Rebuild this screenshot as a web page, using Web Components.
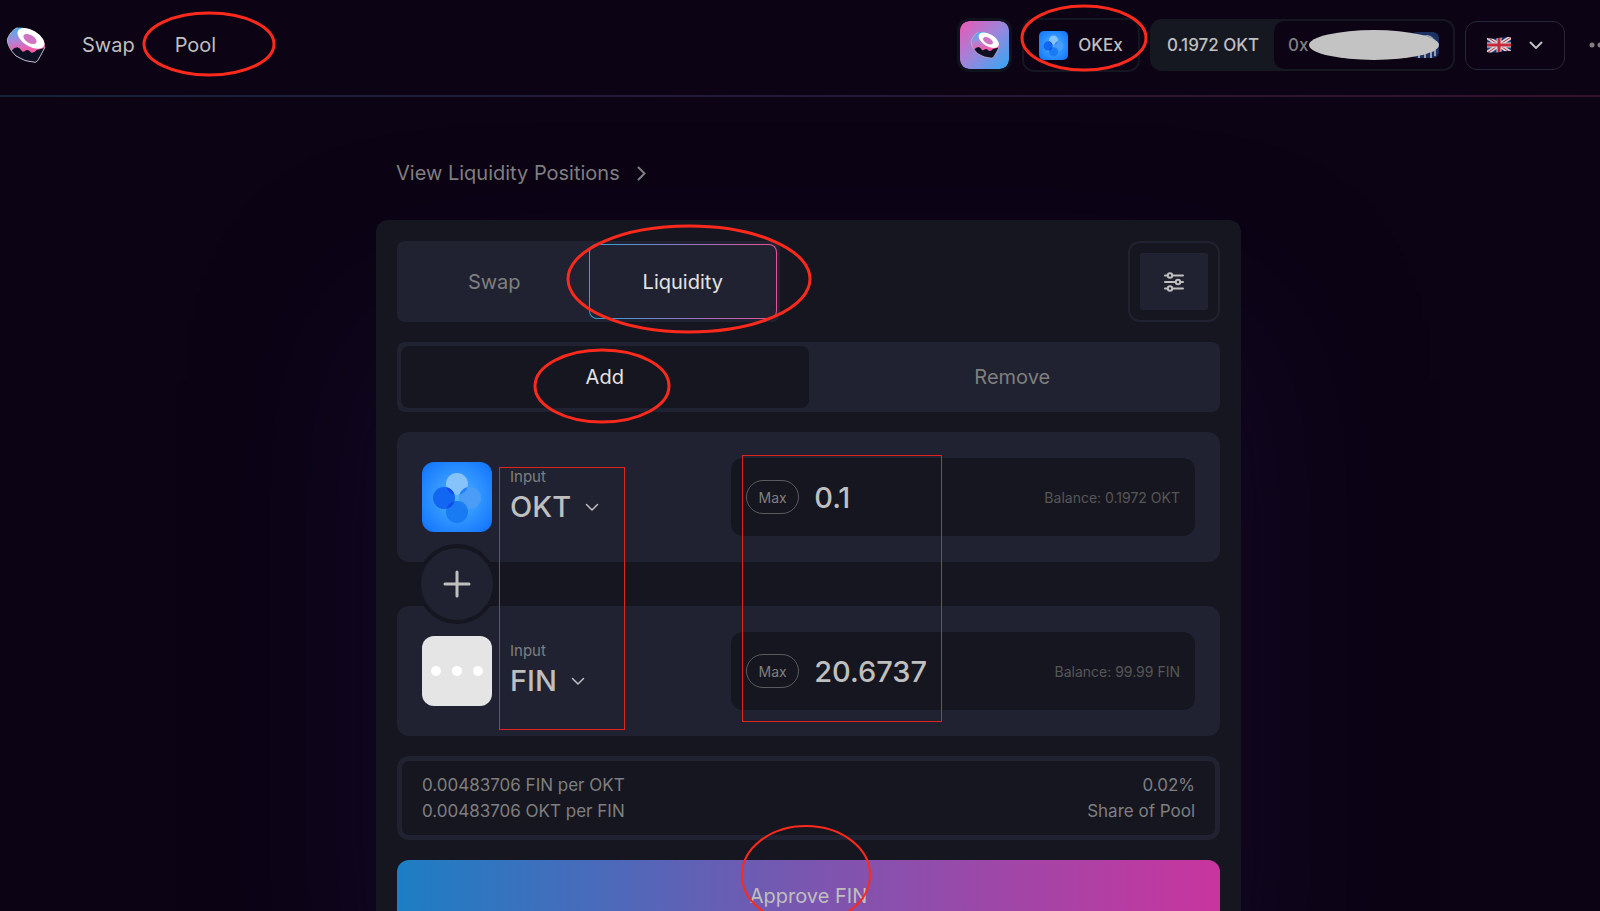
<!DOCTYPE html>
<html lang="en">
<head>
<meta charset="utf-8">
<meta name="viewport" content="width=device-width, initial-scale=1">
<title>Add Liquidity</title>
<style>
  html, body {
    margin: 0;
    height: 100%;
    overflow: hidden;
    background: #0c0314;
    color: #bfbfbf;
    font-family: Inter, "Liberation Sans", sans-serif;
    font-size: 20px;
  }

  body {
    position: relative;
  }
</style>
</head>
<body>
<swap-app></swap-app>
<note-layer></note-layer>

<script>
const base = `
  * { box-sizing: border-box; }
  :host { display: block; }
  svg { display: block; flex: none; }
  button {
    font: inherit;
    color: inherit;
    background: none;
    border: none;
    padding: 0;
    margin: 0;
    cursor: pointer;
  }
  a { color: inherit; text-decoration: none; }
`;

const sushiLogo = (w, id) => `
  <svg width="${w}" viewBox="16 18 120 112" aria-hidden="true">
    <defs>
      <linearGradient id="${id}" x1="0.2" y1="0" x2="0.3" y2="0.8">
        <stop offset="0" stop-color="#3fb4ee"/>
        <stop offset="0.45" stop-color="#a888dc"/>
        <stop offset="0.85" stop-color="#f45aa8"/>
      </linearGradient>
    </defs>
    <path d="M50 23 Q30 32 20 58 Q20 82 46 108 Q72 126 104 127 Q112 124 118 110 L133 82 Q134 62 110 42 Q78 18 50 23Z" fill="url(#${id})"/>
    <path d="M32 92 Q42 82 50 82 Q58 84 64 94 Q70 97 76 91 Q84 88 92 98 Q100 100 108 90 L132 84 L118 110 Q112 124 104 126 Q72 125 47 108Z" fill="#0d1022"/>
    <path d="M50 23 Q30 32 20 58 Q20 82 46 108 Q72 126 104 127 Q112 124 118 110 L133 82" fill="none" stroke="#b8b8c8" stroke-width="3"/>
    <ellipse cx="91" cy="55" rx="45" ry="24" transform="rotate(31 91 55)" fill="#fff"/>
    <ellipse cx="88" cy="57" rx="22" ry="12" transform="rotate(31 88 57)" fill="#cf74c4"/>
  </svg>`;

const okexLogo = (w, id) => `
  <svg width="${w}" height="${w}" viewBox="0 0 70 70" aria-hidden="true">
    <defs>
      <radialGradient id="${id}" r="0.65">
        <stop offset="0" stop-color="#4fb4ff"/>
        <stop offset="1" stop-color="#1276ff"/>
      </radialGradient>
      <clipPath id="${id}-left"><circle cx="22" cy="36" r="11"/></clipPath>
      <clipPath id="${id}-right"><circle cx="48" cy="36" r="11"/></clipPath>
    </defs>
    <rect width="70" height="70" rx="12" fill="url(#${id})"/>
    <circle cx="35" cy="22" r="11" fill="#85c3fa"/>
    <circle cx="48" cy="36" r="11" fill="#4a9cf6"/>
    <circle cx="35" cy="50" r="11" fill="#197bf3"/>
    <circle cx="22" cy="36" r="11" fill="#1267f2"/>
    <g fill="#0f4cee" clip-path="url(#${id}-left)">
      <circle cx="35" cy="22" r="11"/><circle cx="35" cy="50" r="11"/>
    </g>
    <g fill="#1f80f5" clip-path="url(#${id}-right)">
      <circle cx="35" cy="22" r="11"/><circle cx="35" cy="50" r="11"/>
    </g>
  </svg>`;

const chevron = (w, width) => `
  <svg width="${w}" viewBox="0 0 14 9" fill="none" stroke="currentColor" stroke-width="${width}" stroke-linecap="round" stroke-linejoin="round" aria-hidden="true">
    <path d="M1.500 1.500L7 7L12.500 1.500"/>
  </svg>`;

const ukFlag = `
  <svg width="24" height="18" viewBox="0 0 24 18" aria-hidden="true">
    <defs>
      <clipPath id="wave"><path d="M0 2Q6 3.500 12 2T24 1V15Q18 14.500 12 16T0 16Z"/></clipPath>
    </defs>
    <g clip-path="url(#wave)">
      <rect width="24" height="18" fill="#1c3578"/>
      <path d="M0 1L24 17M24 1L0 17" stroke="#d8d8d8" stroke-width="4"/>
      <path d="M0 1L24 17M24 1L0 17" stroke="#c0283c" stroke-width="1"/>
      <path d="M12 0V18M0 9H24" stroke="#d8d8d8" stroke-width="5"/>
      <path d="M12 0V18M0 9H24" stroke="#c8283c" stroke-width="3"/>
    </g>
  </svg>`;

class AppHeader extends HTMLElement {
  constructor() {
    super();
    this.attachShadow({ mode: 'open' }).innerHTML = `
      <style>
        ${base}
        header {
          display: flex;
          align-items: center;
          justify-content: space-between;
          padding: 18px 4px 23px 6px;
        }
        .line {
          height: 2px;
          background: linear-gradient(to right, #162438, #241a38 50%, #35132e);
        }
        nav, .tools { display: flex; align-items: center; }
        nav { gap: 40px; }
        nav svg { margin-right: -4px; }
        .tools { gap: 10px; font-size: 17px; font-weight: 500; }
        .token {
          display: flex;
          align-items: center;
          justify-content: center;
          width: 55px;
          height: 54px;
          border: 3px solid #10121e;
          border-radius: 12px;
          background: linear-gradient(135deg, #ec58b4, #9a86dc 50%, #2fa8f5);
          background-clip: padding-box;
        }
        .chain {
          display: flex;
          align-items: center;
          justify-content: center;
          gap: 10px;
          width: 118px;
          height: 54px;
          border: 2px solid #141622;
          border-radius: 12px;
        }
        .wallet {
          display: flex;
          align-items: center;
          width: 305px;
          height: 52px;
          padding: 2px;
          border-radius: 12px;
          background: #161821;
        }
        .wallet span { flex: 1; text-align: center; white-space: nowrap; }
        .account {
          display: flex;
          align-items: center;
          justify-content: space-between;
          width: 179px;
          height: 48px;
          padding: 0 14px;
          border-radius: 10px;
          background: #0c0314;
          color: #7f7f7f;
        }
        .lang {
          display: flex;
          align-items: center;
          justify-content: center;
          gap: 18px;
          width: 100px;
          height: 49px;
          border: 1px solid #252838;
          border-radius: 12px;
        }
        .more { margin-left: 14px; }
      </style>
      <header>
        <nav>
          ${sushiLogo(40, 'brand')}
          <a href="#swap">Swap</a>
          <a href="#pool">Pool</a>
        </nav>
        <div class="tools">
          <button class="token" aria-label="Add token to wallet">${sushiLogo(30, 'coin')}</button>
          <button class="chain">${okexLogo(29, 'chain')}OKEx</button>
          <div class="wallet">
            <span>0.1972 OKT</span>
            <button class="account">0x
              <svg width="28" height="26" viewBox="0 0 28 26" aria-hidden="true">
                <rect width="28" height="26" rx="6" fill="#1b3060"/>
                <path d="M10 7Q16 1 22 7M8 26V22M14 26V22M20 26V19L24 18V24" fill="none" stroke="#9a9eb4" stroke-width="2"/>
              </svg>
            </button>
          </div>
          <button class="lang" aria-label="Language">${ukFlag}${chevron(14, 2)}</button>
          <button class="more" aria-label="More">
            <svg width="24" height="6" viewBox="0 0 24 6" fill="#7f7f7f" aria-hidden="true">
              <circle cx="3" cy="3" r="2.500"/><circle cx="11" cy="3" r="2.500"/><circle cx="19" cy="3" r="2.500"/>
            </svg>
          </button>
        </div>
      </header>
      <div class="line"></div>
    `;
  }
}
customElements.define('app-header', AppHeader);

class ModeTabs extends HTMLElement {
  constructor() {
    super();
    this.attachShadow({ mode: 'open' }).innerHTML = `
      <style>
        ${base}
        .row { display: flex; justify-content: space-between; }
        .tabs {
          display: grid;
          grid-template-columns: 1fr 1fr;
          flex: 0 1 383px;
          padding: 3px;
          border-radius: 8px;
          background: #202231;
          color: #7f7f7f;
        }
        .tabs button { height: 75px; }
        .tabs .active {
          color: #e3e3e3;
          border: 1px solid transparent;
          border-radius: 8px;
          background:
            linear-gradient(#202231, #202231) padding-box,
            linear-gradient(to right, #2ba4d8, #8a78c0 50%, #ea4f98) border-box;
        }
        .settings {
          display: flex;
          width: 92px;
          height: 81px;
          padding: 10px;
          border: 2px solid #202231;
          border-radius: 12px;
        }
        .settings span {
          display: flex;
          flex: 1;
          align-items: center;
          justify-content: center;
          border-radius: 2px;
          background: #202231;
        }
      </style>
      <div class="row">
        <div class="tabs">
          <button>Swap</button>
          <button class="active">Liquidity</button>
        </div>
        <button class="settings" aria-label="Settings">
          <span>
            <svg width="20" height="20" viewBox="0 0 20 20" fill="#202231" stroke="#bfbfbf" stroke-width="2" stroke-linecap="round" aria-hidden="true">
              <path d="M1 3.500H19M1 10H19M1 16.500H19"/>
              <circle cx="6" cy="3.500" r="2.200"/>
              <circle cx="14" cy="10" r="2.200"/>
              <circle cx="6" cy="16.500" r="2.200"/>
            </svg>
          </span>
        </button>
      </div>
    `;
  }
}
customElements.define('mode-tabs', ModeTabs);

class ActionTabs extends HTMLElement {
  constructor() {
    super();
    this.attachShadow({ mode: 'open' }).innerHTML = `
      <style>
        ${base}
        div {
          display: grid;
          grid-template-columns: 1fr 1fr;
          padding: 4px;
          border-radius: 8px;
          background: #202231;
          color: #7f7f7f;
        }
        button { height: 62px; border-radius: 8px; }
        .active { background: #161620; color: #e3e3e3; }
      </style>
      <div>
        <button class="active">Add</button>
        <button>Remove</button>
      </div>
    `;
  }
}
customElements.define('action-tabs', ActionTabs);

class CurrencyPanel extends HTMLElement {
  connectedCallback() {
    const symbol = this.getAttribute('symbol');
    const id = 'amount-' + symbol.toLowerCase();
    this.attachShadow({ mode: 'open' }).innerHTML = `
      <style>
        ${base}
        .panel {
          display: flex;
          align-items: center;
          padding: 26px 25px;
          border-radius: 12px;
          background: #202231;
        }
        .token {
          display: flex;
          align-items: center;
          gap: 18px;
          width: 40%;
        }
        label {
          display: block;
          color: #7f7f7f;
          font-size: 15px;
          line-height: 20px;
        }
        .select {
          display: flex;
          align-items: center;
          gap: 14px;
          font-size: 29px;
          font-weight: 500;
          line-height: 40px;
        }
        .amount {
          display: flex;
          align-items: center;
          width: 60%;
          height: 78px;
          padding: 0 15px;
          border-radius: 12px;
          background: #161620;
        }
        .max {
          width: 53px;
          height: 34px;
          border: 1px solid #5a5a5e;
          border-radius: 17px;
          color: #7f7f7f;
          font-size: 14px;
        }
        input {
          flex: 1;
          min-width: 0;
          padding: 0 0 0 15px;
          border: none;
          outline: none;
          background: none;
          color: #bfbfbf;
          font: 500 29px Inter, "Liberation Sans", sans-serif;
        }
        .balance { color: #575757; font-size: 14px; }
      </style>
      <div class="panel">
        <div class="token">
          <slot></slot>
          <div>
            <label for="${id}">Input</label>
            <button class="select">${symbol}${chevron(14, 1.5)}</button>
          </div>
        </div>
        <div class="amount">
          <button class="max">Max</button>
          <input id="${id}" type="text" inputmode="decimal" value="${this.getAttribute('amount')}">
          <span class="balance">Balance: ${this.getAttribute('balance')} ${symbol}</span>
        </div>
      </div>
    `;
  }
}
customElements.define('currency-panel', CurrencyPanel);

class PoolRates extends HTMLElement {
  constructor() {
    super();
    this.attachShadow({ mode: 'open' }).innerHTML = `
      <style>
        ${base}
        .rates {
          display: flex;
          justify-content: space-between;
          padding: 11px 20px;
          border: 5px solid #202231;
          border-radius: 12px;
          color: #7f7f7f;
          font-size: 17px;
          line-height: 26px;
        }
        .share { text-align: right; }
      </style>
      <div class="rates">
        <div>
          <div>0.00483706 FIN per OKT</div>
          <div>0.00483706 OKT per FIN</div>
        </div>
        <div class="share">
          <div>0.02%</div>
          <div>Share of Pool</div>
        </div>
      </div>
    `;
  }
}
customElements.define('pool-rates', PoolRates);

class SwapApp extends HTMLElement {
  constructor() {
    super();
    this.attachShadow({ mode: 'open' }).innerHTML = `
      <style>
        ${base}
        /* content runs slightly past the right edge of the window */
        :host { width: calc(100% + 17px); height: 100%; overflow: hidden; }
        main {
          max-width: 865px;
          margin: 0 auto;
          padding-top: 63px;
        }
        .positions {
          display: flex;
          align-items: center;
          gap: 17px;
          width: fit-content;
          margin-left: 20px;
          line-height: 26px;
          color: #7f7f7f;
        }
        .card {
          display: flex;
          flex-direction: column;
          gap: 20px;
          margin-top: 34px;
          padding: 21px;
          border-radius: 12px;
          background: #161620;
          box-shadow: 0 100px 180px rgba(33, 23, 76, 0.4);
        }
        .pair { display: flex; flex-direction: column; }
        .plus {
          display: flex;
          align-items: center;
          justify-content: center;
          position: relative;
          width: 80px;
          height: 80px;
          margin: -18px 0 -18px 20px;
          border: 4px solid #161620;
          border-radius: 50%;
          background: #202231;
        }
        .dots { border-radius: 12px; background: #e5e5e5; }
        .approve {
          height: 72px;
          border-radius: 12px;
          background: linear-gradient(to right, #1c7ec4, #7a56b0 50%, #c8359e);
        }
      </style>
      <app-header></app-header>
      <main>
        <a class="positions" href="#positions">View Liquidity Positions
          <svg width="9" height="15" viewBox="0 0 9 15" fill="none" stroke="currentColor" stroke-width="2" stroke-linecap="round" aria-hidden="true">
            <path d="M1.500 1.500L7.500 7.500L1.500 13.500"/>
          </svg>
        </a>
        <section class="card">
          <mode-tabs></mode-tabs>
          <action-tabs></action-tabs>
          <div class="pair">
            <currency-panel symbol="OKT" amount="0.1" balance="0.1972">${okexLogo(70, 'okt')}</currency-panel>
            <button class="plus" aria-label="Add">
              <svg width="28" height="28" viewBox="0 0 28 28" stroke="#bfbfbf" stroke-width="3" stroke-linecap="round" aria-hidden="true">
                <path d="M14 2V26M2 14H26"/>
              </svg>
            </button>
            <currency-panel symbol="FIN" amount="20.6737" balance="99.99">
              <svg class="dots" width="70" height="70" viewBox="0 0 70 70" fill="#fff" aria-hidden="true">
                <circle cx="14" cy="35" r="5"/><circle cx="35" cy="35" r="5"/><circle cx="56" cy="35" r="5"/>
              </svg>
            </currency-panel>
          </div>
          <pool-rates></pool-rates>
          <button class="approve">Approve FIN</button>
        </section>
      </main>
    `;
  }
}
customElements.define('swap-app', SwapApp);

// hand-drawn marks over the page, they never take clicks
class NoteLayer extends HTMLElement {
  constructor() {
    super();
    this.attachShadow({ mode: 'open' }).innerHTML = `
      <style>
        :host {
          display: block;
          position: absolute;
          inset: 0;
          overflow: hidden;
          pointer-events: none;
        }
        svg { display: block; width: 100%; height: 100%; }
      </style>
      <svg fill="none" stroke="#fb2a1c" stroke-width="3" aria-hidden="true">
        <ellipse cx="1374" cy="45" rx="65" ry="15" fill="#c3c3c3" stroke="none"/>
        <ellipse cx="209" cy="44" rx="65" ry="31"/>
        <ellipse cx="1084" cy="38" rx="62" ry="32"/>
        <ellipse cx="689" cy="279" rx="121" ry="53"/>
        <ellipse cx="602" cy="386" rx="67" ry="36"/>
        <ellipse cx="806" cy="875" rx="64" ry="49" stroke-width="2"/>
        <g stroke-width="1" stroke="#e0241c" shape-rendering="crispEdges">
          <rect x="499" y="467" width="125" height="262"/>
          <rect x="742" y="455" width="199" height="266"/>
        </g>
      </svg>
    `;
  }
}
customElements.define('note-layer', NoteLayer);
</script>
</body>
</html>
